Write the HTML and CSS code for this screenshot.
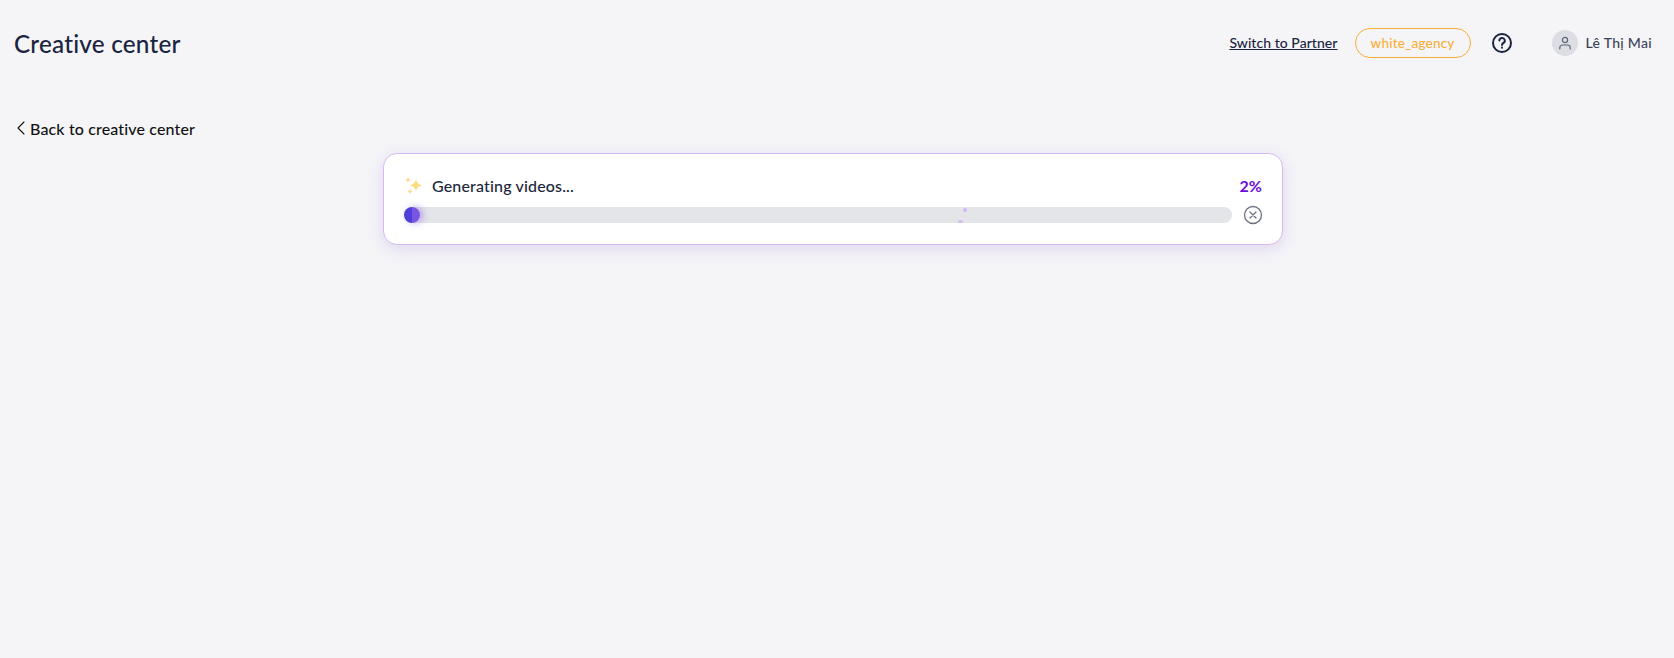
FILE: index.html
```html
<!DOCTYPE html>
<html lang="en">
<head>
<meta charset="utf-8">
<title>Creative center</title>
<link rel="stylesheet" href="styles.css">
</head>
<body>
<header class="topbar">
  <h1 class="title">Creative center</h1>
  <div class="actions">
    <a class="switch" href="#">Switch to Partner</a>
    <span class="pill">white_agency</span>
    <svg class="help" width="22" height="22" viewBox="0 0 22 22" fill="none" stroke="#1a2440" stroke-width="2" stroke-linecap="round">
      <circle cx="11" cy="11" r="9"/>
      <path d="M8.4 8.6a2.7 2.7 0 1 1 4 2.4c-.9.5-1.4 1-1.4 1.9"/>
      <path d="M11 15.600v.1"/>
    </svg>
    <div class="user">
      <span class="avatar">
        <svg width="14" height="14" viewBox="0 0 14 14" fill="none" stroke="#5c6478" stroke-width="1.2" stroke-linecap="round">
          <circle cx="7" cy="4" r="2.6"/>
          <path d="M1.8 13v-1.2A2.8 2.8 0 0 1 4.6 9h4.8a2.8 2.8 0 0 1 2.8 2.8V13"/>
        </svg>
      </span>
      <span class="name">Lê Thị Mai</span>
    </div>
  </div>
</header>
<a class="back" href="#">
  <svg width="10" height="14" viewBox="0 0 10 14" fill="none" stroke="#111" stroke-width="1.1" stroke-linecap="round" stroke-linejoin="round"><path d="M8 1 2 7l6 6"/></svg>
  <span>Back to creative center</span>
</a>
<main class="stage">
  <section class="card">
    <div class="card-head">
      <div class="label">
        <svg class="spark" width="20" height="20" viewBox="0 0 20 20">
          <path d="M12 3.500c.7 4.200 2.100 5.800 6.500 6.800-4.400 1-5.800 2.600-6.500 6.800-.7-4.200-2.100-5.800-6.500-6.800 4.400-1 5.800-2.600 6.500-6.800Z" fill="#fcdc7e"/>
          <path d="M4 1.800c.4 2 1 2.600 3 3.100-2 .5-2.600 1.100-3 3.100-.4-2-1-2.600-3-3.100 2-.5 2.600-1.100 3-3.100Z" fill="#fbd9a0"/>
          <path d="M6 13.500c.4 1.900 1 2.500 2.800 3-1.800.5-2.400 1.100-2.800 3-.4-1.900-1-2.500-2.800-3 1.800-.5 2.400-1.100 2.800-3Z" fill="#fbd9a0"/>
        </svg>
        <span>Generating videos...</span>
      </div>
      <span class="percent">2%</span>
    </div>
    <div class="progress-row">
      <div class="track">
        <div class="fill"></div>
        <i class="dot dot-a"></i>
        <i class="dot dot-b"></i>
      </div>
      <svg class="cancel" width="20" height="20" viewBox="0 0 20 20" fill="none" stroke="#6b7280" stroke-width="1.3" stroke-linecap="round">
        <circle cx="10" cy="10" r="8.500"/>
        <path d="m7 7 6 6M13 7l-6 6"/>
      </svg>
    </div>
  </section>
</main>
</body>
</html>
```
FILE: styles.css
```css
* { box-sizing: border-box; }
html, body { height: 100%; }
body {
  margin: 0;
  background: #f5f5f8;
  font-family: "Lato", "Noto Sans", sans-serif;
  color: #1a2440;
  overflow: hidden;
}
a { color: inherit; }
.topbar {
  display: flex;
  justify-content: space-between;
  align-items: center;
  height: 86px;
  padding: 0 22px 0 14px;
}
.title {
  margin: 0;
  font-size: 24.300px;
  font-weight: 500;
  letter-spacing: 0.2px;
  color: #1a2440;
}
.actions {
  display: flex;
  align-items: center;
}
.switch {
  padding-bottom: 2px;
  font-size: 14px;
  font-weight: 500;
  letter-spacing: 0.05px;
  color: #1a2440;
}
.pill {
  display: inline-flex;
  align-items: center;
  justify-content: center;
  width: 116px;
  height: 30px;
  margin-left: 17px;
  padding-bottom: 1px;
  border: 1px solid #f9ae37;
  border-radius: 15px;
  font-size: 13.500px;
  font-weight: 500;
  color: #f9ae37;
  letter-spacing: 0.2px;
}
.help { margin-left: 20px; display: block; }
.user {
  display: flex;
  align-items: center;
  gap: 8px;
  margin-left: 39px;
}
.avatar {
  display: flex;
  align-items: center;
  justify-content: center;
  width: 26px;
  height: 26px;
  border-radius: 50%;
  background: #dcdee3;
}
.name {
  padding-bottom: 2px;
  font-size: 14px;
  font-weight: 500;
  letter-spacing: 0.3px;
  color: #3b4358;
}
.back {
  display: flex;
  align-items: center;
  gap: 4px;
  height: 24px;
  margin: 30px 0 0 16px;
  font-size: 16px;
  font-weight: 500;
  letter-spacing: 0.14px;
  color: #111;
  text-decoration: none;
}
.stage {
  display: flex;
  justify-content: center;
  padding: 13px 0 0 8px;
  width: 1658px;
}
.card {
  width: 900px;
  height: 92px;
  padding: 19px 19px 0 20px;
  background: #fff;
  border: 1px solid #d4baf0;
  border-radius: 14px;
  box-shadow: 0 4px 16px rgba(140, 90, 200, 0.2);
}
.card-head {
  display: flex;
  justify-content: space-between;
  align-items: center;
  height: 24px;
  padding-right: 1px;
}
.label {
  display: flex;
  align-items: center;
  gap: 8px;
  font-size: 16px;
  font-weight: 500;
  letter-spacing: 0.16px;
  color: #20273a;
}
.spark { display: block; }
.percent {
  font-size: 16px;
  font-weight: 700;
  color: #6a0dd8;
}
.progress-row {
  display: flex;
  align-items: center;
  gap: 11px;
  margin-top: 8px;
}
.track {
  position: relative;
  flex: 1;
  height: 16px;
  border-radius: 8px;
  background: #e4e5e9;
}
.fill {
  width: 16px;
  height: 16px;
  border-radius: 50%;
  background: linear-gradient(90deg, #4f3fd8 0 50%, #7a55e4 50% 100%);
  box-shadow: 3px 0 7px rgba(130, 90, 230, 0.5);
}
.dot {
  position: absolute;
  border-radius: 50%;
  background: #d2b8f4;
}
.dot-a { left: 559px; top: 1px; width: 4px; height: 4px; }
.dot-b { left: 554px; top: 13px; width: 5px; height: 3px; }
.cancel { display: block; }
```
